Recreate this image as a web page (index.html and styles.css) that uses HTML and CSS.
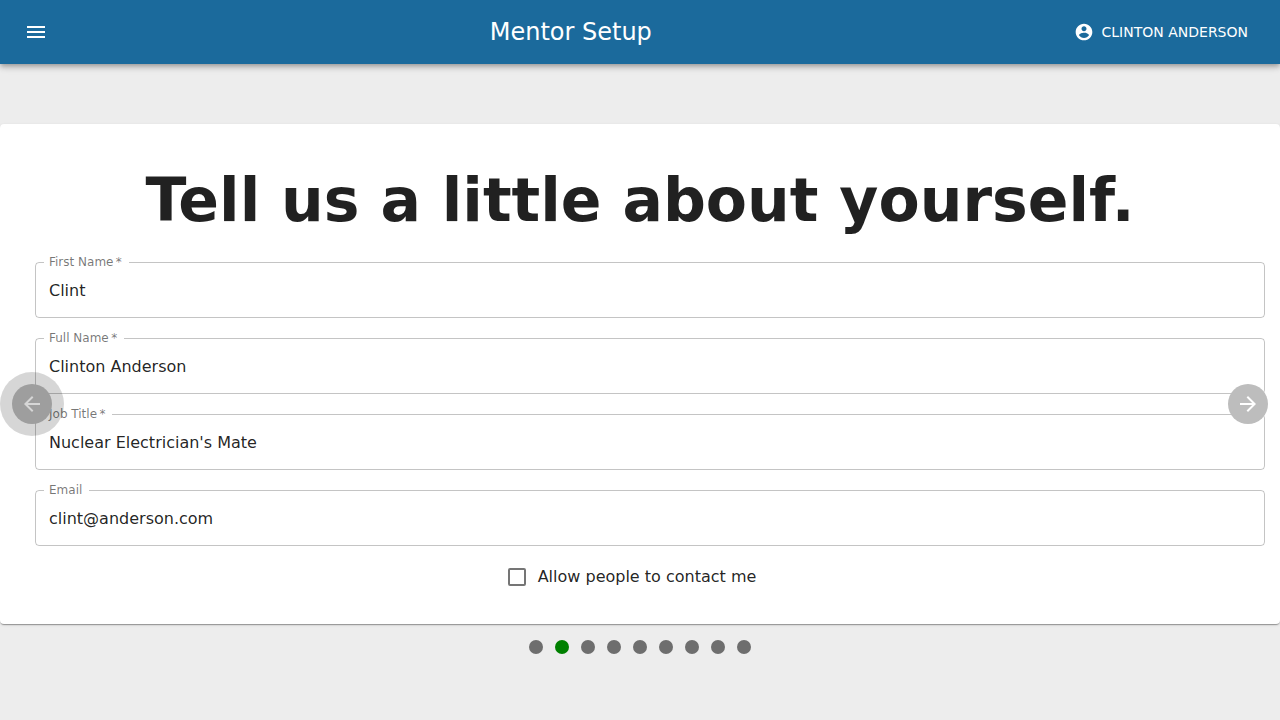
FILE: index.html
```html
<!DOCTYPE html>
<html lang="en">
<head>
<meta charset="utf-8">
<title>Mentor Setup</title>
<link rel="stylesheet" href="styles.css">
</head>
<body>
<header class="app-bar">
  <button class="menu-button" type="button" aria-label="Menu">
    <svg class="icon" viewBox="0 0 24 24"><path d="M3 18h18v-2H3v2zm0-5h18v-2H3v2zm0-7v2h18V6H3z"/></svg>
  </button>
  <h1 class="app-title">Mentor Setup</h1>
  <button class="user-button" type="button">
    <svg class="user-icon" viewBox="0 0 24 24"><path d="M12 2C6.48 2 2 6.48 2 12s4.48 10 10 10 10-4.48 10-10S17.52 2 12 2zm0 3c1.66 0 3 1.34 3 3s-1.34 3-3 3-3-1.34-3-3 1.34-3 3-3zm0 14.2c-2.5 0-4.71-1.28-6-3.22.03-1.99 4-3.08 6-3.08 1.99 0 5.97 1.09 6 3.08-1.29 1.94-3.5 3.22-6 3.22z"/></svg>
    Clinton Anderson
  </button>
</header>
<main class="setup">
  <form class="card">
    <h2 class="card-title">Tell us a little about yourself.</h2>
    <div class="field">
      <label class="field-label" for="first">First Name&thinsp;*</label>
      <input class="field-input" id="first" type="text" value="Clint">
    </div>
    <div class="field">
      <label class="field-label" for="full">Full Name&thinsp;*</label>
      <input class="field-input" id="full" type="text" value="Clinton Anderson">
    </div>
    <div class="field">
      <label class="field-label" for="job">Job Title&thinsp;*</label>
      <input class="field-input" id="job" type="text" value="Nuclear Electrician's Mate">
    </div>
    <div class="field">
      <label class="field-label" for="email">Email</label>
      <input class="field-input" id="email" type="email" value="clint@anderson.com">
    </div>
    <label class="contact"><input class="contact-box" type="checkbox">Allow people to contact me</label>
  </form>
  <nav class="dots" aria-label="Steps">
    <button class="dot" type="button" aria-label="Step 1"></button>
    <button class="dot dot-active" type="button" aria-label="Step 2"></button>
    <button class="dot" type="button" aria-label="Step 3"></button>
    <button class="dot" type="button" aria-label="Step 4"></button>
    <button class="dot" type="button" aria-label="Step 5"></button>
    <button class="dot" type="button" aria-label="Step 6"></button>
    <button class="dot" type="button" aria-label="Step 7"></button>
    <button class="dot" type="button" aria-label="Step 8"></button>
    <button class="dot" type="button" aria-label="Step 9"></button>
  </nav>
  <button class="arrow arrow-back" type="button" aria-label="Previous">
    <svg class="icon" viewBox="0 0 24 24"><path d="M20 11H7.83l5.59-5.59L12 4l-8 8 8 8 1.41-1.41L7.83 13H20v-2z"/></svg>
  </button>
  <button class="arrow arrow-next" type="button" aria-label="Next">
    <svg class="icon" viewBox="0 0 24 24"><path d="M12 4l-1.41 1.41L16.17 11H4v2h12.17l-5.58 5.59L12 20l8-8z"/></svg>
  </button>
</main>
</body>
</html>
```

FILE: styles.css
```css
* { box-sizing: border-box; }

body {
  margin: 0;
  min-height: 100vh;
  background: #ededed;
  color: rgba(0, 0, 0, 0.87);
  font: 16px/24px "DejaVu Sans", sans-serif;
}

button {
  border: 0;
  padding: 0;
  background: none;
  color: inherit;
  font: inherit;
  cursor: pointer;
}

.app-bar {
  display: flex;
  align-items: center;
  min-height: 64px;
  padding: 0 24px 0 12px;
  background: #1b6a9c;
  color: #fff;
  box-shadow: 0 2px 4px -1px rgba(0, 0, 0, 0.2), 0 4px 5px rgba(0, 0, 0, 0.14), 0 1px 10px rgba(0, 0, 0, 0.12);
}

.menu-button {
  margin-right: 16px;
  padding: 12px;
}

.icon {
  display: block;
  width: 24px;
  height: 24px;
  fill: currentColor;
}

.app-title {
  flex: 1;
  margin: 0;
  text-align: center;
  font-size: 24px;
  font-weight: 400;
  line-height: 32px;
}

.user-button {
  display: flex;
  align-items: center;
  gap: 8px;
  padding: 6px 8px;
  font-size: 14px;
  text-transform: uppercase;
}

.user-icon {
  width: 20px;
  height: 20px;
  fill: currentColor;
}

.setup {
  position: relative;
  padding-top: 60px;
}

.card {
  display: flex;
  flex-direction: column;
  gap: 20px;
  padding: 40px 15px 36px 35px;
  border-radius: 4px;
  background: #fff;
  box-shadow: 0 2px 1px -1px rgba(0, 0, 0, 0.2), 0 1px 1px rgba(0, 0, 0, 0.14), 0 1px 3px rgba(0, 0, 0, 0.12);
}

.card-title {
  margin: 0 20px 6px 0;
  text-align: center;
  font-size: 60px;
  line-height: 72px;
}

.field {
  position: relative;
}

.field-label {
  position: absolute;
  top: -8px;
  left: 9px;
  padding: 0 7px 0 5px;
  background: #fff;
  color: rgba(0, 0, 0, 0.54);
  font-size: 12px;
  line-height: 16px;
}

.field-input {
  display: block;
  width: 100%;
  height: 56px;
  padding: 0 13px;
  border: 1px solid rgba(0, 0, 0, 0.23);
  border-radius: 4px;
  background: none;
  color: inherit;
  font: inherit;
}

.contact {
  display: flex;
  align-items: center;
  align-self: center;
  gap: 12px;
  margin-right: 36px;
  line-height: 22px;
}

.contact-box {
  appearance: none;
  width: 18px;
  height: 18px;
  margin: 0;
  border: 2px solid rgba(0, 0, 0, 0.54);
  border-radius: 2px;
}

.dots {
  display: flex;
  justify-content: center;
  gap: 12px;
  padding: 16px;
}

.dot {
  width: 14px;
  height: 14px;
  border-radius: 50%;
  background: #6e6e6e;
}

.dot-active {
  background: green;
}

.arrow {
  position: absolute;
  top: 320px;
  display: grid;
  place-items: center;
  width: 40px;
  height: 40px;
  border-radius: 50%;
  background: #bdbdbd;
  color: #fff;
}

.arrow-back {
  left: 12px;
  background: #9e9e9e;
  color: #d6d6d6;
  box-shadow: 0 0 0 12px rgba(0, 0, 0, 0.16);
}

.arrow-next {
  right: 12px;
}
```
